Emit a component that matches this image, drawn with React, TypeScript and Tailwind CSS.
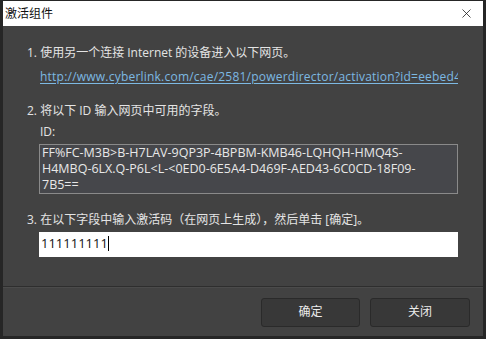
import { X } from "lucide-react";

const font = { fontFamily: '"Open Sans", "Noto Sans CJK SC", sans-serif' };

function App() {
  return (
    <div className="w-[486px] h-[339px] bg-[#262626] pt-px px-[3px] pb-[3px] flex flex-col" style={font}>
      {/* title bar */}
      <div className="h-[25px] bg-white flex items-center justify-between pl-[2px] pr-[9px]">
        <span className="text-[12px] text-[#111]">激活组件</span>
        <X size={15} strokeWidth={1.2} className="text-[#111]" />
      </div>

      <div className="flex-1 bg-[#424242] flex flex-col">
        <div className="pl-[24px] pr-[25px] pt-[18px] text-[12px] leading-[17px] text-[#e4e4e4]">
          <p>1. 使用另一个连接 Internet 的设备进入以下网页。</p>
          <div className="ml-[13px] mt-[7px] overflow-hidden whitespace-nowrap">
            <a className="text-[#7db9e3] underline underline-offset-2 tracking-[0.22px]">
              http://www.cyberlink.com/cae/2581/powerdirector/activation?id=eebed4
            </a>
          </div>
          <p className="mt-[17px]">2. 将以下 ID 输入网页中可用的字段。</p>
          <p className="ml-[13px] mt-[4px]">ID:</p>
          <div className="ml-[12px] mt-[4px] h-[50px] border border-[#8a8a8a] bg-[#46474b] pl-[2px] text-[12.5px] leading-[16px] text-[#e8e8e8] overflow-hidden whitespace-nowrap">
            <div>FF%FC-M3B&gt;B-H7LAV-9QP3P-4BPBM-KMB46-LQHQH-HMQ4S-</div>
            <div>H4MBQ-6LX.Q-P6L&lt;L-&lt;0ED0-6E5A4-D469F-AED43-6C0CD-18F09-</div>
            <div>7B5==</div>
          </div>
          <p className="mt-[17px]">3. 在以下字段中输入激活码（在网页上生成），然后单击 [确定]。</p>
          <div className="ml-[12px] mt-[4px] h-[25px] bg-white flex items-center pl-[2px] pb-[2px] text-[13px] text-[#111]">
            <span>111111111</span>
            <span className="w-px h-[15px] bg-black" />
          </div>
        </div>

        <div className="mt-auto border-t border-[#2e2e2e]">
          <div className="border-t border-[#4b4b4b] h-[49px] flex items-center justify-end gap-[10px] pr-[13px]">
            <button className="w-[99px] h-[29px] rounded-[3px] bg-[#383838] border border-[#2a2a2a] text-[12px] text-[#ececec]">
              确定
            </button>
            <button className="w-[100px] h-[29px] rounded-[3px] bg-[#383838] border border-[#2a2a2a] text-[12px] text-[#ececec]">
              关闭
            </button>
          </div>
        </div>
      </div>
    </div>
  );
}

export default App;
